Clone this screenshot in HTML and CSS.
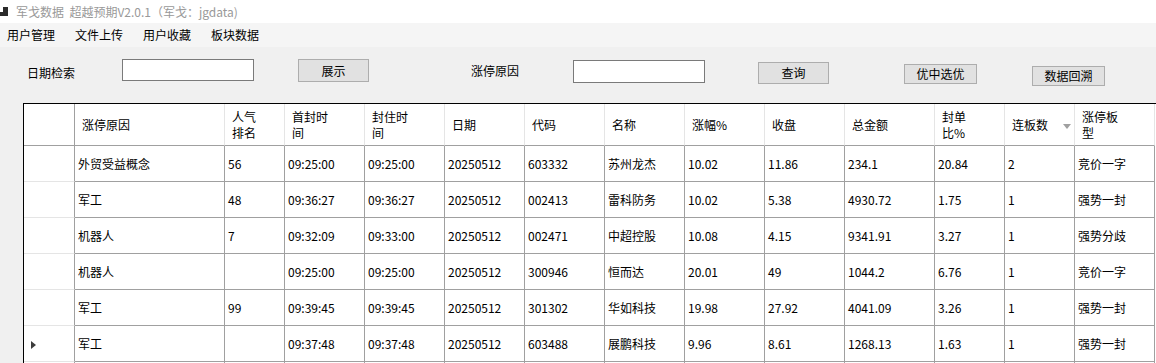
FILE: index.html
```html
<!DOCTYPE html>
<html lang="zh-CN">
<head>
    <meta charset="UTF-8">
    <meta name="viewport" content="width=device-width, initial-scale=1.0">
    <title>军戈数据 超越预期V2.0.1</title>
    <link rel="stylesheet" href="styles.css">
</head>
<body>
    <!-- 标题栏 -->
    <div class="titlebar">
        <svg class="app-icon" width="8" height="23" viewBox="0 0 8 23">
            <rect x="0" y="12" width="3" height="4" fill="#2b2b2b"/>
            <rect x="3" y="7" width="5" height="9" fill="#2b2b2b"/>
        </svg>
        <span class="title-text">军戈数据&nbsp; 超越预期V2.0.1（军戈：jgdata)</span>
    </div>

    <!-- 菜单 -->
    <div class="menubar">
        <span class="menu-item">用户管理</span>
        <span class="menu-item">文件上传</span>
        <span class="menu-item">用户收藏</span>
        <span class="menu-item">板块数据</span>
    </div>

    <!-- 查询条件 -->
    <div class="toolbar">
        <label class="lbl lbl-date" for="dateSearch">日期检索</label>
        <input class="txt txt-date" type="text" id="dateSearch">
        <button class="btn btn-show">展示</button>
        <label class="lbl lbl-reason" for="reason">涨停原因</label>
        <input class="txt txt-reason" type="text" id="reason">
        <button class="btn btn-query">查询</button>
        <button class="btn btn-best">优中选优</button>
        <button class="btn btn-back">数据回溯</button>
    </div>

    <!-- 数据表格 -->
    <div class="grid">
        <table>
            <thead>
                <tr>
                    <th class="rh"></th>
                    <th class="w150">涨停原因</th>
                    <th class="w60">人气<br>排名</th>
                    <th class="w80">首封时<br>间</th>
                    <th class="w80">封住时<br>间</th>
                    <th class="w80">日期</th>
                    <th class="w80">代码</th>
                    <th class="w80">名称</th>
                    <th class="w80">涨幅%</th>
                    <th class="w80">收盘</th>
                    <th class="w90">总金额</th>
                    <th class="w70">封单<br>比%</th>
                    <th class="w70">连板数<span class="sort-glyph"></span></th>
                    <th class="w80">涨停板<br>型</th>
                </tr>
            </thead>
            <tbody>
                <tr>
                    <td class="rh"></td>
                    <td>外贸受益概念</td><td>56</td><td>09:25:00</td><td>09:25:00</td><td>20250512</td><td>603332</td>
                    <td>苏州龙杰</td><td>10.02</td><td>11.86</td><td>234.1</td><td>20.84</td><td>2</td><td>竞价一字</td>
                </tr>
                <tr>
                    <td class="rh"></td>
                    <td>军工</td><td>48</td><td>09:36:27</td><td>09:36:27</td><td>20250512</td><td>002413</td>
                    <td>雷科防务</td><td>10.02</td><td>5.38</td><td>4930.72</td><td>1.75</td><td>1</td><td>强势一封</td>
                </tr>
                <tr>
                    <td class="rh"></td>
                    <td>机器人</td><td>7</td><td>09:32:09</td><td>09:33:00</td><td>20250512</td><td>002471</td>
                    <td>中超控股</td><td>10.08</td><td>4.15</td><td>9341.91</td><td>3.27</td><td>1</td><td>强势分歧</td>
                </tr>
                <tr>
                    <td class="rh"></td>
                    <td>机器人</td><td></td><td>09:25:00</td><td>09:25:00</td><td>20250512</td><td>300946</td>
                    <td>恒而达</td><td>20.01</td><td>49</td><td>1044.2</td><td>6.76</td><td>1</td><td>竞价一字</td>
                </tr>
                <tr>
                    <td class="rh"></td>
                    <td>军工</td><td>99</td><td>09:39:45</td><td>09:39:45</td><td>20250512</td><td>301302</td>
                    <td>华如科技</td><td>19.98</td><td>27.92</td><td>4041.09</td><td>3.26</td><td>1</td><td>强势一封</td>
                </tr>
                <tr>
                    <td class="rh"><span class="row-arrow"></span></td>
                    <td>军工</td><td></td><td>09:37:48</td><td>09:37:48</td><td>20250512</td><td>603488</td>
                    <td>展鹏科技</td><td>9.96</td><td>8.61</td><td>1268.13</td><td>1.63</td><td>1</td><td>强势一封</td>
                </tr>
                <tr>
                    <td class="rh"></td>
                    <td></td><td></td><td></td><td></td><td></td><td></td>
                    <td></td><td></td><td></td><td></td><td></td><td></td><td></td>
                </tr>
            </tbody>
        </table>
    </div>
</body>
</html>
```

FILE: styles.css
```css
body {
    margin: 0;
    width: 1156px;
    height: 363px;
    overflow: hidden;
    background-color: #f0f0f0;
    font-family: "Noto Sans CJK SC", "Liberation Sans", sans-serif;
    font-size: 12px;
    line-height: 16px;
    color: #000;
}
/* 标题栏 */
.titlebar {
    height: 23px;
    background-color: #fff;
    display: flex;
    align-items: center;
}
.app-icon {
    display: block;
}
.title-text {
    margin-left: 8px;
    color: #999;
}
/* 菜单 */
.menubar {
    height: 24px;
    background-color: #f5f5f5;
    display: flex;
    align-items: center;
    gap: 20px;
    padding-left: 7px;
}
/* 查询条件 */
.toolbar {
    height: 56px;
    display: flex;
    align-items: flex-start;
}
.lbl {
    width: 48px;
    line-height: 22px;
    white-space: nowrap;
}
.txt {
    box-sizing: border-box;
    width: 132px;
    height: 22px;
    border: 1px solid #7a7a7a;
    background-color: #fff;
    padding: 0 3px;
    font: inherit;
    outline: none;
}
.btn {
    box-sizing: border-box;
    height: 22px;
    background-color: #e1e1e1;
    border: 1px solid #adadad;
    padding: 0;
    font: inherit;
    color: #000;
}
.lbl-date { margin: 15px 0 0 27px; }
.txt-date { margin: 12px 0 0 47px; }
.btn-show { margin: 12px 0 0 44px; width: 71px; height: 23px; }
.lbl-reason { margin: 13px 0 0 102px; }
.txt-reason { margin: 13px 0 0 54px; height: 23px; }
.btn-query { margin: 15px 0 0 53px; width: 71px; }
.btn-best { margin: 17px 0 0 75px; width: 73px; height: 20px; }
.btn-back { margin: 19px 0 0 55px; width: 73px; height: 20px; }
/* 数据表格 */
.grid {
    margin-left: 23px;
    height: 260px;
    border-left: 1px solid #000;
    border-top: 1px solid #000;
    background-color: #fff;
    overflow: hidden;
}
.grid table {
    border-collapse: separate;
    border-spacing: 0;
    table-layout: fixed;
    width: 1131px;
}
.grid th, .grid td {
    box-sizing: border-box;
    border-right: 1px solid #a0a0a0;
    border-bottom: 1px solid #a0a0a0;
    white-space: nowrap;
    overflow: hidden;
    text-align: left;
    font-weight: normal;
}
.grid th {
    height: 42px;
    padding: 0 0 0 7px;
    border-right-color: #e5e5e5;
}
.grid td {
    height: 36px;
    padding: 0 0 0 3px;
}
.grid th.rh {
    border-right-color: #a0a0a0;
}
.grid td.rh {
    border-bottom-color: #e5e5e5;
    padding-left: 7px;
}
.rh { width: 51px; }
.w60 { width: 60px; }
.w70 { width: 70px; }
.w80 { width: 80px; }
.w90 { width: 90px; }
.w150 { width: 150px; }
.sort-glyph {
    display: inline-block;
    margin-left: 15px;
    vertical-align: middle;
    border-left: 4px solid transparent;
    border-right: 4px solid transparent;
    border-top: 5px solid #a0a0a0;
}
.row-arrow {
    display: inline-block;
    vertical-align: middle;
    border-top: 4px solid transparent;
    border-bottom: 4px solid transparent;
    border-left: 5px solid #3c3c3c;
}
```
